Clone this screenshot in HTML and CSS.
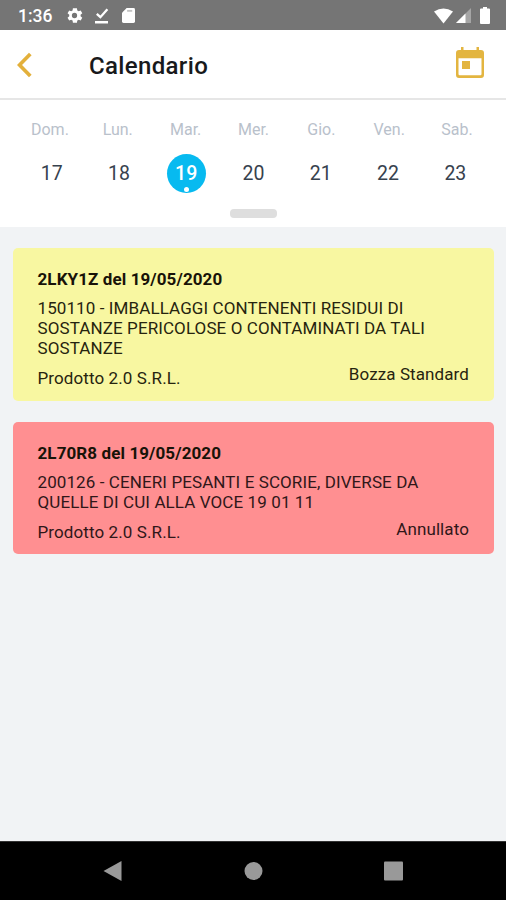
FILE: index.html
```html
<!DOCTYPE html>
<html lang="it">
<head>
<meta charset="utf-8">
<title>Calendario</title>
<link rel="stylesheet" href="styles.css">
</head>
<body>
<div class="screen">
  <div class="status">
    <span class="clock">1:36</span>
    <svg class="gear" viewBox="2 2 20 20"><path d="M19.14 12.94a7 7 0 0 0 0-1.88l2.03-1.58-1.92-3.32-2.39.96a7 7 0 0 0-1.62-.94L14.88 3.6h-4.76l-.36 2.58a7 7 0 0 0-1.62.94l-2.39-.96-1.92 3.32 2.03 1.58a7 7 0 0 0 0 1.88l-2.03 1.58 1.92 3.32 2.39-.96a7 7 0 0 0 1.62.94l.36 2.58h4.76l.36-2.58a7 7 0 0 0 1.62-.94l2.39.96 1.92-3.32zM12 15.100a3.100 3.100 0 1 1 0-6.200 3.100 3.100 0 0 1 0 6.200z"/></svg>
    <svg class="done" viewBox="0 0 14 16"><path d="M0 13h13v2.500H0z"/><path class="tick" d="M1.800 5.800 5.400 9.200 12.400 1.200"/></svg>
    <svg class="card-icon" viewBox="0 0 14 16"><path d="M5 0h7.400Q14 0 14 1.600v12.800Q14 16 12.400 16H1.600Q0 16 0 14.400V5z"/><path class="slots" d="M5.500 2h5.500v2H5.500z"/></svg>
    <span class="spacer"></span>
    <svg class="wifi" viewBox="0 0 20 16"><path d="M0 3.200Q10-3 20 3.200L10 16z"/></svg>
    <svg class="signal" viewBox="0 0 15 15"><path class="faint" d="M15 0v15H0z"/><path d="M9.500 5.500V15H0z"/></svg>
    <svg class="battery" viewBox="0 0 10 17"><path d="M3 0h4v1.500h2q1 0 1 1V16q0 1-1 1H1q-1 0-1-1V2.500q0-1 1-1h2z"/></svg>
  </div>
  <header class="appbar">
    <svg class="back" viewBox="0 0 16 26"><path d="M13.300 2 2.500 13l10.800 11"/></svg>
    <h1>Calendario</h1>
    <svg class="calendar" viewBox="0 0 28 31"><path fill-rule="evenodd" d="M5 0h2.500v3h13V0H23v3h2q3 0 3 3v22q0 3-3 3H3q-3 0-3-3V6q0-3 3-3h2zM2.500 11.300v15.700q0 1.200 1.200 1.200h20.600q1.200 0 1.200-1.200V11.300z"/><path d="M6 14h8v8H6z"/></svg>
  </header>
  <section class="week">
    <div class="names"><span>Dom.</span><span>Lun.</span><span>Mar.</span><span>Mer.</span><span>Gio.</span><span>Ven.</span><span>Sab.</span></div>
    <div class="dates"><span>17</span><span>18</span><span class="selected">19</span><span>20</span><span>21</span><span>22</span><span>23</span></div>
    <div class="handle"></div>
  </section>
  <main class="list">
    <article class="item draft">
      <h2>2LKY1Z del 19/05/2020</h2>
      <p>150110 - IMBALLAGGI CONTENENTI RESIDUI DI<br>SOSTANZE PERICOLOSE O CONTAMINATI DA TALI<br>SOSTANZE</p>
      <div class="foot"><span class="company">Prodotto 2.0 S.R.L.</span><span class="state">Bozza Standard</span></div>
    </article>
    <article class="item cancelled">
      <h2>2L70R8 del 19/05/2020</h2>
      <p>200126 - CENERI PESANTI E SCORIE, DIVERSE DA<br>QUELLE DI CUI ALLA VOCE 19 01 11</p>
      <div class="foot"><span class="company">Prodotto 2.0 S.R.L.</span><span class="state">Annullato</span></div>
    </article>
  </main>
  <nav class="system">
    <svg viewBox="0 0 20 22"><path d="M18.500 1v20L.5 11z"/></svg>
    <svg viewBox="0 0 20 22"><circle cx="10.500" cy="11" r="9"/></svg>
    <svg viewBox="0 0 20 22"><rect x="1" y="1.500" width="19" height="19" rx="1"/></svg>
  </nav>
</div>
</body>
</html>
```
FILE: styles.css
```css
* { box-sizing: border-box; }
body { margin: 0; font-family: Roboto, "Liberation Sans", sans-serif; }
h1, h2, p { margin: 0; }
svg { display: block; flex: none; }
.screen { width: 506px; height: 900px; display: flex; flex-direction: column; background: #f1f3f5; overflow: hidden; }
.status { height: 30px; flex: none; display: flex; align-items: center; background: #757575; padding: 1px 16px 0 18px; color: #fff; fill: #fff; }
.clock { font-size: 17.5px; font-weight: 500; width: 48px; line-height: 20px; }
.gear { width: 17px; height: 17px; }
.done { width: 14px; height: 16px; margin-left: 12px; }
.tick { fill: none; stroke: #fff; stroke-width: 2.3; }
.card-icon { width: 13px; height: 15px; margin-left: 13px; }
.slots { fill: #c4c4c4; }
.spacer { flex: 1; }
.wifi { width: 19px; height: 16px; }
.signal { width: 15px; height: 15px; margin-left: 3px; }
.faint { opacity: .35; }
.battery { width: 10px; height: 17px; margin-left: 9px; }
.appbar { height: 70px; flex: none; display: flex; align-items: center; padding: 0 22px 0 17px; background: #fff; border-bottom: 2px solid #e6e6e6; }
.back { width: 16px; height: 26px; margin-top: 2px; fill: none; stroke: #e3b03b; stroke-width: 3.7; }
h1 { flex: 1; margin: 3px 0 0 56px; font-size: 24px; line-height: 30px; font-weight: 500; letter-spacing: .35px; color: #18191b; }
.calendar { width: 28px; height: 31px; margin-bottom: 3px; fill: #e3b540; }
.week { height: 127px; flex: none; background: #fff; padding-top: 20px; }
.names, .dates { display: grid; grid-template-columns: repeat(7, 1fr); text-align: center; }
.names { margin: 0 15px 0 16px; font-size: 16px; line-height: 20px; color: #b9c1cb; }
.dates { margin: 14px 17px 0 18px; font-size: 19.5px; line-height: 39px; color: #37424e; }
.selected { position: relative; width: 39px; height: 39px; justify-self: center; border-radius: 50%; background: #07baf0; color: #fff; font-weight: 500; }
.selected::after { content: ""; position: absolute; left: 17px; bottom: 1px; width: 5px; height: 5px; border-radius: 50%; background: #fff; }
.handle { width: 47px; height: 9px; margin: 16px auto 0 230px; border-radius: 4px; background: #dedede; }
.list { flex: 1; padding: 21px 12px 0 13px; display: flex; flex-direction: column; gap: 21px; }
.item { border-radius: 5px; padding: 20px 25px 0 24.5px; font-size: 17px; line-height: 20px; letter-spacing: .1px; }
.draft { height: 153px; background: #f8f7a1; color: #26240f; }
.cancelled { height: 132px; background: #ff8f91; color: #301719; }
h2 { font-size: 17px; line-height: 22px; font-weight: 700; color: #181308; }
.item p { margin-top: 8px; white-space: nowrap; }
.foot { display: flex; justify-content: space-between; margin-top: 6px; }
.company { margin-top: 4px; }
.cancelled p { margin-top: 8px; }
.cancelled .foot { margin-top: 7px; }
.cancelled .company { margin-top: 3px; }
.system { height: 59px; flex: none; display: flex; align-items: center; gap: 120px; padding-left: 103px; background: #000; border-top: 1px solid #333; fill: #999; }
.system svg { width: 20px; height: 22px; }
```
